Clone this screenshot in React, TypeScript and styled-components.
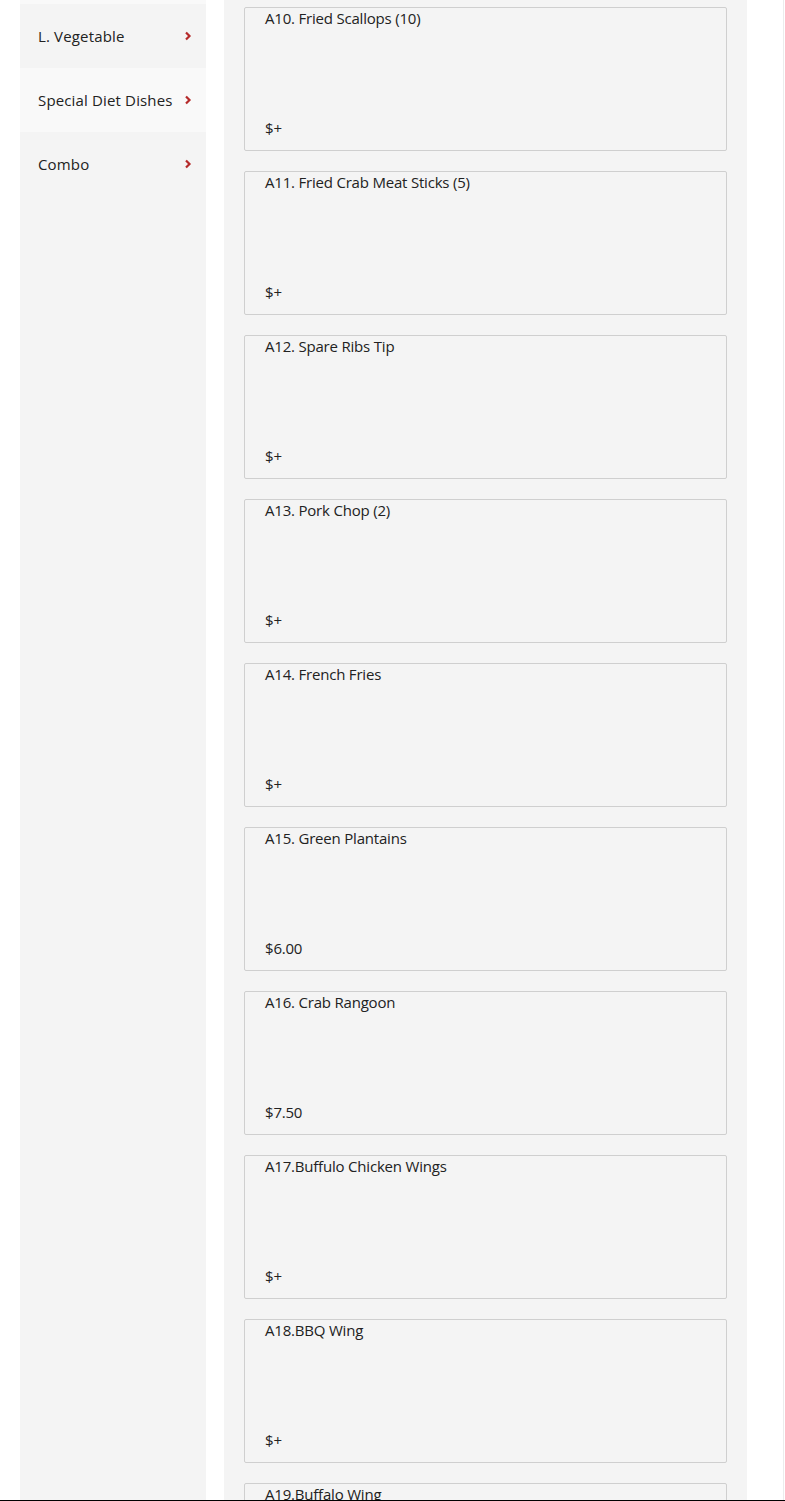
import React from "react";
import styled, { createGlobalStyle } from "styled-components";

const Global = createGlobalStyle`
  html, body { margin: 0; padding: 0; background: #fff; }
  body { font-family: "Open Sans", "Liberation Sans", sans-serif; color: #222; }
`;

const Frame = styled.div`
  height: 1500px;
  overflow: hidden;
  border-bottom: 1px solid #000;
  display: flex;
  align-items: flex-start;
  padding-left: 20px;
  box-sizing: content-box;
`;

const Sidebar = styled.nav`
  width: 186px;
  height: 1500px;
  background: #f4f4f4;
  border-top: 4px solid #f9f9f9;
  box-sizing: border-box;
  flex-shrink: 0;
`;

const SideItem = styled.div<{ $active?: boolean }>`
  height: 64px;
  display: flex;
  align-items: center;
  justify-content: space-between;
  padding: 0 14px 0 18px;
  background: ${(p) => (p.$active ? "#f9f9f9" : "#f4f4f4")};
  font-size: 15px;
  color: #222;
  letter-spacing: 0.15px;
`;

const Main = styled.main`
  width: 523px;
  margin-left: 18px;
  height: 1500px;
  background: #f4f4f4;
  padding: 7px 20px 0 20px;
  box-sizing: border-box;
  display: flex;
  flex-direction: column;
  gap: 20px;
  flex-shrink: 0;
`;

const Card = styled.div`
  height: 144px;
  flex-shrink: 0;
  box-sizing: border-box;
  border: 1px solid #cfcfcf;
  border-radius: 2px;
  background: #f4f4f4;
  padding: 0 20px 12px 20px;
  display: flex;
  flex-direction: column;
  justify-content: space-between;
`;

const Title = styled.div`
  font-size: 15px;
  line-height: 20px;
  color: #222;
  letter-spacing: -0.2px;
`;

const Price = styled.div`
  font-size: 15px;
  line-height: 20px;
  color: #222;
  letter-spacing: -0.2px;
`;

const RightEdge = styled.div`
  margin-left: 36px;
  width: 1px;
  height: 1500px;
  background: #ececec;
`;

const Chevron = () => (
  <svg width="8" height="10" viewBox="0 0 8 10">
    <polyline points="2,1.5 5.5,5 2,8.5" fill="none" stroke="#b52a2a" strokeWidth="2.2" />
  </svg>
);

const side = ["L. Vegetable", "Special Diet Dishes", "Combo"];
const items: [string, string][] = [
  ["A10. Fried Scallops (10)", "$+"],
  ["A11. Fried Crab Meat Sticks (5)", "$+"],
  ["A12. Spare Ribs Tip", "$+"],
  ["A13. Pork Chop (2)", "$+"],
  ["A14. French Fries", "$+"],
  ["A15. Green Plantains", "$6.00"],
  ["A16. Crab Rangoon", "$7.50"],
  ["A17.Buffulo Chicken Wings", "$+"],
  ["A18.BBQ Wing", "$+"],
  ["A19.Buffalo Wing", "$+"],
];

export default function App() {
  return (
    <>
      <Global />
      <Frame>
        <Sidebar>
          {side.map((s, i) => (
            <SideItem key={s} $active={i === 1}>
              <span>{s}</span>
              <Chevron />
            </SideItem>
          ))}
        </Sidebar>
        <Main>
          {items.map(([t, p]) => (
            <Card key={t}>
              <Title>{t}</Title>
              <Price>{p}</Price>
            </Card>
          ))}
        </Main>
        <RightEdge />
      </Frame>
    </>
  );
}
